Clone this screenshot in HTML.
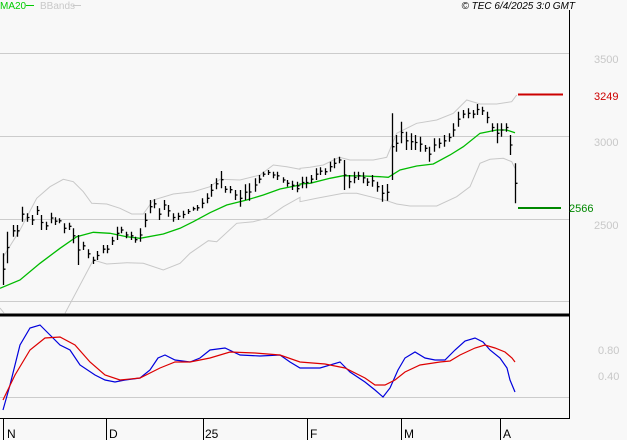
<!DOCTYPE html>
<html><head><meta charset="utf-8"><style>
html,body{margin:0;padding:0;background:#f8f8f8;width:627px;height:440px;overflow:hidden}
svg{display:block}
text{font-family:"Liberation Sans",sans-serif}
</style></head><body>
<svg id="s" width="627" height="440" xmlns="http://www.w3.org/2000/svg">
<rect width="627" height="440" fill="#f8f8f8"/>
<g stroke="#cccccc" stroke-width="1">
<line x1="0" y1="53.5" x2="569" y2="53.5"/>
<line x1="0" y1="136.5" x2="569" y2="136.5"/>
<line x1="0" y1="219.5" x2="569" y2="219.5"/>
<line x1="0" y1="301.5" x2="569" y2="301.5"/>
<line x1="0" y1="397.5" x2="569" y2="397.5"/>
</g>
<line x1="0" y1="315" x2="569" y2="315" stroke="#000" stroke-width="3"/>
<line x1="569.5" y1="10" x2="569.5" y2="419" stroke="#000"/>
<line x1="0" y1="418.5" x2="570" y2="418.5" stroke="#000"/>
<g stroke="#000">
<line x1="3.5" y1="419" x2="3.5" y2="440"/>
<line x1="106.5" y1="419" x2="106.5" y2="440"/>
<line x1="203.5" y1="419" x2="203.5" y2="440"/>
<line x1="307.5" y1="419" x2="307.5" y2="440"/>
<line x1="401.5" y1="419" x2="401.5" y2="440"/>
<line x1="500.5" y1="419" x2="500.5" y2="440"/>
</g>
<g font-size="12" fill="#000">
<text x="7" y="438">N</text><text x="109" y="438">D</text><text x="205" y="438">25</text>
<text x="310" y="438">F</text><text x="404" y="438">M</text><text x="503" y="438">A</text>
</g>
<text x="0" y="9" font-size="10" fill="#00cc00">MA20</text>
<line x1="26" y1="5.5" x2="34" y2="5.5" stroke="#00cc00"/>
<text x="40" y="9" font-size="10" fill="#c8c8c8">BBands</text>
<line x1="73" y1="5.5" x2="81" y2="5.5" stroke="#c8c8c8"/>
<text x="575" y="9" font-size="10" font-style="italic" fill="#000" text-anchor="end">© TEC 6/4/2025 3:0 GMT</text>
<g font-size="11" fill="#c8c8c8">
<text x="594" y="63">3500</text><text x="594" y="146">3000</text><text x="594" y="229">2500</text>
<text x="598" y="354">0.80</text><text x="598" y="380">0.40</text>
</g>
<text x="594" y="100" font-size="11" fill="#cc0000">3249</text>
<text x="569" y="212" font-size="11" fill="#008800">2566</text>
<line x1="518" y1="94.5" x2="563" y2="94.5" stroke="#cc0000" stroke-width="2"/>
<line x1="518" y1="208" x2="561" y2="208" stroke="#008800" stroke-width="2"/>
<g id="lines" fill="none"></g>
<g id="bars" stroke="#000" stroke-width="1.3"></g>
</svg>
<script>
var NS="http://www.w3.org/2000/svg";
function pl(g,pts,col,w){var p=document.createElementNS(NS,"polyline");p.setAttribute("points",pts.map(function(a){return a[0].toFixed(1)+","+a[1].toFixed(1)}).join(" "));p.setAttribute("stroke",col);p.setAttribute("stroke-width",w);p.setAttribute("fill","none");g.appendChild(p);}
function c3(a){return a.map(function(p){return [p[0]/3,90+p[1]/3]})}
function c4(a){return a.map(function(p){return [290+p[0]/3,80+p[1]/3]})}
var L=document.getElementById("lines");
var up=c3([[10,500],[60,420],[110,325],[150,290],[190,268],[220,275],[250,305],[275,340],[320,342],[360,355],[395,372],[430,372],[460,330],[520,312],[580,305],[630,290],[660,268],[720,270],[780,255],[820,225],[860,230],[900,238]]).concat(c4([[30,265],[60,262],[100,255],[148,232],[180,240],[250,240],[290,232],[320,160],[380,130],[440,120],[490,100],[530,60],[570,72],[620,72],[665,65],[680,45]]));
pl(L,up,"#c8c8c8",1);
pl(L,[[0,308],[4,313]],"#c8c8c8",1);
var lo=c3([[195,670],[280,510],[320,522],[380,518],[430,520],[490,540],[540,520],[570,490],[625,452],[650,455],[710,400],[760,395],[800,385],[850,350],[900,322]]).concat(c4([[30,365],[80,355],[160,340],[200,340],[260,355],[290,362],[320,372],[360,378],[440,378],[500,350],[540,320],[570,250],[600,238],[640,235],[665,245],[675,265]]));
pl(L,lo,"#c8c8c8",1);
var ma=c3([[0,595],[60,570],[120,520],[180,475],[230,440],[280,427],[330,430],[380,440],[420,445],[490,432],[540,415],[580,395],[630,368],[680,345],[740,330],[790,315],[840,297],[900,285]]).concat(c4([[30,312],[60,310],[120,295],[160,287],[220,288],[270,290],[295,292],[330,270],[380,258],[430,252],[480,225],[520,200],[570,160],[620,150],[650,150],[675,158]]));
pl(L,ma,"#00bb00",1.3);
pl(L,[[3,410],[10,385],[20,345],[30,328],[40,325],[50,335],[60,345],[70,350],[80,365],[95,375],[105,380],[115,382],[125,380],[140,378],[150,370],[158,358],[165,355],[175,360],[190,362],[200,358],[210,350],[225,348],[240,355],[260,356],[280,355],[290,362],[300,368],[320,368],[340,362],[350,372],[365,382],[375,390],[383,397],[390,388],[398,370],[405,358],[415,352],[425,358],[435,360],[445,360],[455,350],[465,341],[475,338],[483,342],[490,350],[500,358],[507,368],[510,380],[515,392]],"#0000dd",1.2);
pl(L,[[3,400],[15,375],[30,350],[45,338],[60,337],[75,345],[90,362],[105,375],[120,380],[140,378],[160,368],[175,362],[190,362],[210,358],[230,352],[255,353],[280,355],[300,362],[325,364],[345,368],[365,378],[375,385],[385,385],[395,380],[405,372],[420,365],[440,362],[450,361],[460,355],[475,348],[485,345],[495,348],[505,352],[512,358],[515,362]],"#dd0000",1.2);
var b3=[[8,490,585],[22,425,520],[38,405,440],[50,405,440],[65,350,395],[80,370,395],[95,375,405],[110,348,375],[122,375,420],[137,395,420],[152,368,400],[165,382,405],[177,385,400],[192,400,430],[207,398,420],[220,415,460],[235,435,525],[250,455,480],[265,478,505],[278,500,522],[292,483,510],[308,465,490],[322,465,490],[336,440,465],[350,410,450],[364,410,430],[378,425,445],[393,425,450],[406,440,458],[420,415,455],[436,370,412],[450,330,370],[462,328,355],[478,355,390],[493,330,360],[505,345,380],[520,370,395],[535,368,390],[550,362,385],[564,357,372],[578,350,362],[592,345,362],[606,325,355],[620,310,340],[634,282,320],[648,265,298],[662,243,295],[676,288,308],[690,288,310],[706,300,330],[720,300,350],[734,283,330],[748,280,332],[764,265,305],[778,255,280],[790,245,260],[805,240,255],[820,245,265],[832,245,270],[848,262,278],[862,270,290],[876,272,300],[890,285,307]];
var b4=[[20,305,330],[35,290,325],[48,290,325],[62,285,310],[77,265,300],[90,262,285],[105,265,285],[120,245,275],[133,235,265],[148,230,250],[163,240,330],[177,285,325],[191,275,310],[205,275,300],[218,277,310],[232,295,318],[245,285,320],[262,305,335],[277,315,365],[290,312,362],[305,100,300],[318,165,215],[333,125,190],[348,155,210],[362,160,210],[376,165,210],[390,170,215],[405,195,215],[418,200,245],[432,175,215],[447,175,205],[462,165,200],[477,160,185],[490,130,170],[505,95,140],[520,90,115],[533,85,115],[548,90,115],[562,72,105],[575,80,105],[590,95,130],[605,130,155],[620,130,190],[634,130,170],[648,130,155],[660,165,225],[675,250,370]];
var B=document.getElementById("bars"),d="";
b3.forEach(function(b){var x=Math.round(b[0]/3)+.5,t=90+b[1]/3,u=90+b[2]/3,c=(t+u)/2;d+="M"+x+" "+t.toFixed(1)+"V"+u.toFixed(1)+"M"+x+" "+c.toFixed(1)+"h2";});
b4.forEach(function(b){var x=Math.round(290+b[0]/3)+.5,t=80+b[1]/3,u=80+b[2]/3,c=(t+u)/2;d+="M"+x+" "+t.toFixed(1)+"V"+u.toFixed(1)+"M"+x+" "+c.toFixed(1)+"h2";});
var p=document.createElementNS(NS,"path");p.setAttribute("d",d);B.appendChild(p);
</script>
</body></html>
